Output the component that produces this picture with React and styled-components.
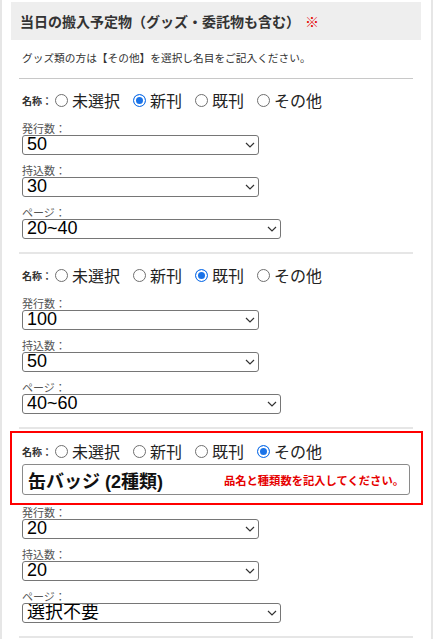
import React from "react";
import styled, { createGlobalStyle, css } from "styled-components";

const GlobalStyle = createGlobalStyle`
  body {
    margin: 0;
    background: #fff;
    font-family: "Liberation Sans", "Noto Sans CJK JP", sans-serif;
    color: #222;
  }
`;

const TYPES = ["未選択", "新刊", "既刊", "その他"];

// 搬入予定物の一覧
const items = [
  { type: "新刊", issued: "50", carried: "30", pages: "20~40" },
  { type: "既刊", issued: "100", carried: "50", pages: "40~60" },
  {
    type: "その他",
    name: "缶バッジ (2種類)",
    issued: "20",
    carried: "20",
    pages: "選択不要",
  },
];

const Chevron = () => (
  <ChevronIcon width="10" height="6" viewBox="0 0 10 6">
    <path d="M1 1l4 4 4-4" fill="none" stroke="#333" strokeWidth="1.2" />
  </ChevronIcon>
);

const SelectField = ({ label, value, wide }) => (
  <Field>
    <FieldLabel>{label}</FieldLabel>
    <SelectWrap wide={wide}>
      <Select defaultValue={value}>
        <option>{value}</option>
      </Select>
      <Chevron />
    </SelectWrap>
  </Field>
);

const NameRow = ({ index, type }) => (
  <RadioRow>
    <NameLabel>名称：</NameLabel>
    {TYPES.map((t) => (
      <RadioOption key={t}>
        <RadioInput
          type="radio"
          name={`type-${index}`}
          defaultChecked={t === type}
        />
        <RadioText>{t}</RadioText>
      </RadioOption>
    ))}
  </RadioRow>
);

const App = () => {
  return (
    <Page>
      <GlobalStyle />
      <Heading>
        当日の搬入予定物（グッズ・委託物も含む）<Required>※</Required>
      </Heading>
      <Note>グッズ類の方は【その他】を選択し名目をご記入ください。</Note>
      {items.map((item, i) => (
        <Section key={i} other={item.type === "その他"}>
          {item.type === "その他" ? (
            <HighlightBox>
              <NameRow index={i} type={item.type} />
              <OtherWrap>
                <OtherInput defaultValue={item.name} />
                <OtherHint>品名と種類数を記入してください。</OtherHint>
              </OtherWrap>
            </HighlightBox>
          ) : (
            <NameRow index={i} type={item.type} />
          )}
          <Fields other={item.type === "その他"}>
            <SelectField label="発行数：" value={item.issued} />
            <SelectField label="持込数：" value={item.carried} />
            <SelectField label="ページ：" value={item.pages} wide />
          </Fields>
        </Section>
      ))}
    </Page>
  );
};

export default App;

const Page = styled.div`
  width: 433px;
  min-height: 639px;
  box-sizing: border-box;
  padding: 2px 10px 0 9px;
  border-left: 2px solid #e6e6e6;
  border-right: 2px solid #e6e6e6;
`;

const Heading = styled.h2`
  margin: 0;
  height: 38px;
  display: flex;
  align-items: center;
  padding-left: 9px;
  background: #eeeeee;
  font-size: 14px;
  font-weight: bold;
  color: #333;
  font-family: "Noto Sans CJK JP", sans-serif;
`;

const Required = styled.span`
  color: #e60000;
  margin-left: 5px;
  font-weight: normal;
`;

const Note = styled.p`
  margin: 0 8px;
  padding: 10px 3px 12px;
  border-bottom: 1px solid #c8c8c8;
  font-size: 10.7px;
  line-height: 16px;
  color: #333;
  font-family: "Noto Sans CJK JP", sans-serif;
`;

const Section = styled.section`
  margin: 0 8px;
  padding: 9px 3px 13px;
  border-bottom: 2px solid #e6e6e6;

  ${(props) =>
    props.other &&
    css`
      padding-top: 2px;
    `}
`;

const HighlightBox = styled.div`
  margin: 0 -13px 0 -12px;
  border: 2px solid #f00;
  padding: 6px 11px 8px 10px;
`;

const RadioRow = styled.div`
  height: 24px;
  display: flex;
  align-items: center;
  gap: 13px;
`;

const NameLabel = styled.span`
  font-size: 10px;
  font-weight: bold;
  color: #333;
  margin-right: -10px;
  font-family: "Noto Sans CJK JP", sans-serif;
`;

const RadioOption = styled.label`
  display: flex;
  align-items: center;
  gap: 4px;
`;

const RadioInput = styled.input`
  appearance: none;
  width: 13px;
  height: 13px;
  margin: 0;
  border: 1px solid #6f6f6f;
  border-radius: 50%;
  box-sizing: border-box;
  background: #fff;

  &:checked {
    border-color: #1a73e8;
    background: #1a73e8;
    box-shadow: inset 0 0 0 2px #fff;
  }
`;

const RadioText = styled.span`
  font-size: 16px;
  line-height: 20px;
  color: #222;
  font-family: "Noto Sans CJK JP", sans-serif;
`;

const OtherWrap = styled.div`
  position: relative;
  margin-top: 1px;
`;

const OtherInput = styled.input`
  display: block;
  width: 388px;
  height: 31px;
  box-sizing: border-box;
  margin: 0;
  padding: 0 5px;
  border: 1px solid #8a8a8a;
  border-radius: 3px;
  font-size: 18px;
  font-weight: bold;
  color: #111;
  font-family: "Liberation Sans", "Noto Sans CJK JP", sans-serif;
`;

const OtherHint = styled.span`
  position: absolute;
  right: 6px;
  top: 50%;
  transform: translateY(-50%);
  font-size: 11.3px;
  font-weight: bold;
  color: #e60000;
  font-family: "Noto Sans CJK JP", sans-serif;
`;

const Fields = styled.div`
  display: flex;
  flex-direction: column;
  gap: 8px;
  margin-top: 9px;

  ${(props) =>
    props.other &&
    css`
      margin-top: 0;
    `}
`;

const Field = styled.div`
  display: flex;
  flex-direction: column;
`;

const FieldLabel = styled.span`
  font-size: 11px;
  line-height: 14px;
  color: #555;
  font-family: "Noto Sans CJK JP", sans-serif;
`;

const SelectWrap = styled.div`
  position: relative;
  width: ${(props) => (props.wide ? "259px" : "237px")};
`;

const Select = styled.select`
  appearance: none;
  display: block;
  width: 100%;
  height: 20px;
  box-sizing: border-box;
  margin: 0;
  padding: 0 0 1px 4px;
  border: 1px solid #767676;
  border-radius: 3px;
  background: #fff;
  font-size: 18px;
  line-height: 17px;
  color: #000;
  font-family: "Liberation Sans", "Noto Sans CJK JP", sans-serif;
`;

const ChevronIcon = styled.svg`
  position: absolute;
  right: 4px;
  top: 7px;
  pointer-events: none;
`;
